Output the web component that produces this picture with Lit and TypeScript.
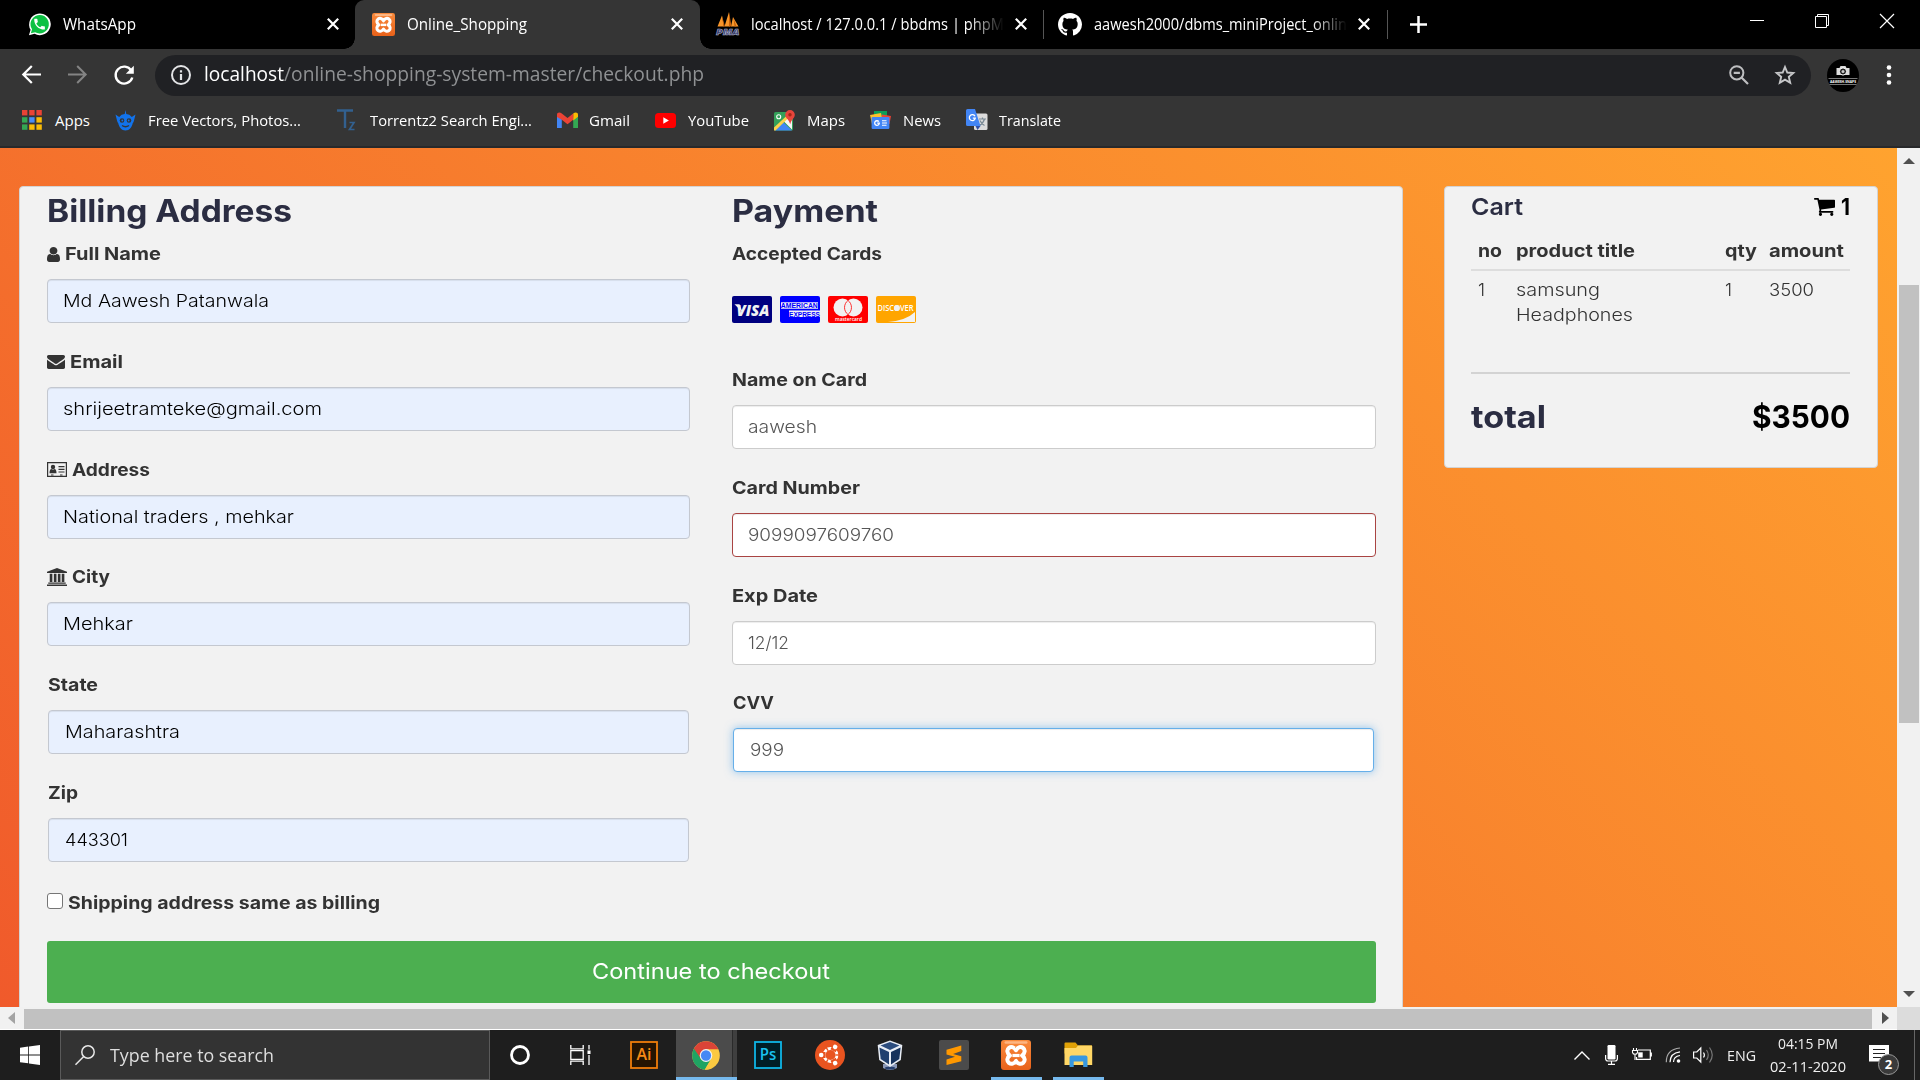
import { LitElement, html, css, svg, nothing } from "lit";
import { customElement, property, query } from "lit/decorators.js";

/** One line of text, condensed or widened to a given advance width. */
@customElement("fit-text")
class FitText extends LitElement {
  static styles = css`
    :host { display: inline-block; white-space: nowrap; flex: none; }
    .run { display: inline-block; transform-origin: left center; }
  `;
  @property() text = "";
  @property({ type: Number }) w = 0;
  @query(".run") run!: HTMLElement;
  firstUpdated() {
    const natural = this.run.getBoundingClientRect().width;
    this.style.width = this.w + "px";
    this.run.style.transform = `scaleX(${(this.w / natural).toFixed(4)})`;
  }
  render() { return html`<span class="run">${this.text}</span>`; }
}

const t = (text: string, w: number, cls = "") => html`<fit-text class=${cls} .text=${text} .w=${w}></fit-text>`;

const icon = (w: number, h: number, vb: string, body: unknown, cls = "") =>
  html`<svg class="ic ${cls}" width=${w} height=${h} viewBox=${vb} preserveAspectRatio="none">${body}</svg>`;

const PHONE = "M6.62 10.79c1.44 2.83 3.76 5.14 6.59 6.59l2.2-2.2c.27-.27.67-.36 1.02-.24 1.12.37 2.33.57 3.57.57.55 0 1 .45 1 1V20c0 .55-.45 1-1 1-9.39 0-17-7.61-17-17 0-.55.45-1 1-1h3.5c.55 0 1 .45 1 1 0 1.25.2 2.45.57 3.57.11.35.03.74-.25 1.02l-2.2 2.2z";
const OCTO = "M8 0C3.58 0 0 3.58 0 8c0 3.54 2.29 6.53 5.47 7.59.4.07.55-.17.55-.38 0-.19-.01-.82-.01-1.49-2.01.37-2.53-.49-2.69-.94-.09-.23-.48-.94-.82-1.13-.28-.15-.68-.52-.01-.53.63-.01 1.08.58 1.23.82.72 1.21 1.87.87 2.33.66.07-.52.28-.87.51-1.07-1.78-.2-3.64-.89-3.64-3.95 0-.87.31-1.59.82-2.15-.08-.2-.36-1.02.08-2.12 0 0 .67-.21 2.2.82.64-.18 1.32-.27 2-.27s1.36.09 2 .27c1.53-1.04 2.2-.82 2.2-.82.44 1.1.16 1.92.08 2.12.51.56.82 1.27.82 2.15 0 3.07-1.87 3.75-3.65 3.95.29.25.54.73.54 1.48 0 1.07-.01 1.93-.01 2.2 0 .21.15.46.55.38A8.01 8.01 0 0 0 16 8c0-4.42-3.58-8-8-8z";
const USER = "M1536 1399q0 109-62.5 187t-150.5 78h-854q-88 0-150.5-78t-62.5-187q0-85 8.5-160.5t31.5-152 58.5-131 94-89 134.5-34.5q131 128 313 128t313-128q76 0 134.5 34.5t94 89 58.5 131 31.5 152 8.500 160.500zm-256-887q0 159-112.500 271.500t-271.500 112.500-271.500-112.500-112.500-271.500 112.500-271.500 271.500-112.500 271.500 112.500 112.500 271.500z";
const ENVELOPE = "M1792 710v794q0 66-47 113t-113 47h-1472q-66 0-113-47t-47-113v-794q44 49 101 87 362 246 497 345 57 42 92.500 65.500t94.500 48 110 24.500h2q51 0 110-24.500t94.500-48 92.500-65.500q170-123 498-345 57-39 100-87zm0-294q0 79-49 151t-122 123q-376 261-468 325-10 7-42.500 31t-54 38.500-52 32.500-57.500 27-50 9h-2q-23 0-50-9t-57.500-27-52-32.500-54-38.500-42.500-31q-91-64-262-182.500t-205-142.500q-62-42-117-115.500t-55-136.500q0-78 41.500-130t118.500-52h1472q65 0 112.500 47t47.500 113z";
const CART = "M704 1536q0 52-38 90t-90 38-90-38-38-90 38-90 90-38 90 38 38 90zm896 0q0 52-38 90t-90 38-90-38-38-90 38-90 90-38 90 38 38 90zm128-1088v512q0 24-16.500 42.500t-40.500 21.500l-1044 122q13 60 13 70 0 16-24 64h920q26 0 45 19t19 45-19 45-45 19h-1024q-26 0-45-19t-19-45q0-11 8-31.500t16-36 21.500-40 15.500-29.500l-177-823h-204q-26 0-45-19t-19-45 19-45 45-19h256q16 0 28.500 6.500t19.500 15.500 13 24.500 8 26 5.500 29.500 4.500 26h1201q26 0 45 19t19 45z";

const whatsapp = icon(23, 23, "0 0 24 24", svg`
  <path d="M1 23.2l1.7-5.6A11.3 11.3 0 1 1 6.9 21.7z" fill="#fff"/>
  <path d="M3 21.2l1.2-4.2A9.6 9.6 0 1 1 7.4 20z" fill="#0dc143"/>
  <path d=${PHONE} fill="#fff" transform="translate(4.6 4.2) scale(.62)"/>`);
const xampp = (s: number) => icon(s, s, "0 0 30 30", svg`
  <defs><linearGradient id="xg" x1="0" y1="0" x2="0" y2="1"><stop offset="0" stop-color="#f98a3c"/><stop offset="1" stop-color="#e9621a"/></linearGradient></defs>
  <rect width="30" height="30" rx="3" fill="url(#xg)"/><rect x="3.5" y="1.2" width="23" height="2.6" rx="1.3" fill="#ffc49a" opacity=".75"/>
  <path d="M15 10.200c2-3.600 5-3.900 7-2.400 2.600 2 2 5.200-.9 7.700 3 2 3.400 5.400 1 7.400-2.300 1.700-5.400.9-7.100-2-1.700 2.900-4.800 3.700-7.100 2-2.400-2-2-5.400 1-7.400-2.900-2.500-3.500-5.700-.9-7.700 2-1.500 5-1.200 7 2.400z" fill="none" stroke="#fff" stroke-width="4" stroke-linejoin="round"/>
  <path d="M11.400 15.500h7.200" stroke="#fff" stroke-width="3.200"/>`);
const pma = icon(24, 24, "0 0 24 24", svg`
  <path d="M6 3.500L8 14.500H1.500zM13 0l1 14.500H8.500zM17 5l5.500 9.500H15z" fill="#f7962b"/><path d="M13 0l2.500 14.500H13zM6 4l3 10.500H7.500zM17.500 6l3 8.500h-2z" fill="#c9620a"/>
  <text x="0" y="23" class="pmat" textLength="23.500" lengthAdjust="spacingAndGlyphs">PMA</text>`);
const github = icon(24, 23, "0 0 16 16", svg`<path d=${OCTO} fill="#fff"/>`);
const cross = icon(12, 12, "0 0 12 12", svg`<path d="M.8.8l10.400 10.400M11.200.8L.8 11.200" stroke="#fff" stroke-width="2.200"/>`, "cross");

const bookmarks = [
  { name: "Apps", w: 35, box: 35, ic: icon(20, 20, "0 0 20 20", [0, 1, 2].map(r => [0, 1, 2].map(c => svg`<rect x=${c * 7.2} y=${r * 7.2} width="5.400" height="5.400" fill=${[["#ea4335", "#ea4335", "#ea4335"], ["#34a853", "#4a8cf7", "#fbbc05"], ["#34a853", "#fbbc05", "#fbbc05"]][r][c]}/>`))) },
  { name: "Free Vectors, Photos...", w: 153, box: 164, ic: icon(21, 21, "0 0 21 21", svg`
    <path d="M10.500 0l.8 4a7.500 7.500 0 0 1 5.500 3l3.700-2.500-1.500 6q-.5 2-1.200 2.500c-.8 4-3.300 7.500-7.300 7.500S4 17 3.200 13Q2.500 12.500 2 10.500L.5 4.500 4.200 7a7.500 7.500 0 0 1 5.500-3z" fill="#1273eb"/>
    <circle cx="7" cy="10.500" r="2.300" fill="#353535"/><circle cx="14" cy="10.500" r="2.300" fill="#353535"/><circle cx="7.300" cy="10.500" r=".9" fill="#1273eb"/><circle cx="13.700" cy="10.500" r=".9" fill="#1273eb"/>
    <path d="M7 15.500q3.500 2.500 7 0" stroke="#353535" stroke-width="1.400" fill="none"/>`) },
  { name: "Torrentz2 Search Engi...", w: 162, box: 162, ic: icon(20, 22, "0 0 20 22", svg`
    <path d="M0 1.500h16M8 1.500V19" stroke="#32608f" stroke-width="2.400"/><path d="M12.500 13.500h4.500l-4.500 7h5" stroke="#32608f" stroke-width="1.700" fill="none"/>`) },
  { name: "Gmail", w: 41, box: 40, ic: icon(21, 16, "0 0 21 16", svg`
    <path d="M0 2.500V16h4.800V6z" fill="#4285f4"/><path d="M21 2.500V16h-4.800V6z" fill="#34a853"/><path d="M16.200 1.500C18 0 21 0 21 2.800v2l-4.800 3.600z" fill="#fbbc04"/>
    <path d="M0 2.800C0 0 3 0 4.800 1.500L10.500 6l5.700-4.500v6.300l-5.700 4.400L4.800 7.800 0 5z" fill="#ea4335"/>`) },
  { name: "YouTube", w: 61, box: 61, ic: icon(21, 15, "0 0 21 15", svg`<rect width="21" height="15" rx="3.500" fill="#f00"/><path d="M8.300 4.200l5.600 3.300-5.600 3.300z" fill="#fff"/>`) },
  { name: "Maps", w: 38, box: 38, ic: icon(21, 21, "0 0 21 21", svg`
    <rect x="0" y="2" width="19" height="18.500" rx="1.500" fill="#34a059"/><path d="M0 19L18 4v15.500L9.500 11z" fill="#f6f6f6"/><path d="M1 20.500l8.500-8 8.500 8z" fill="#4285f4"/><path d="M0 17.500L13.500 5l2 2L1.500 20.500H0z" fill="#fbd04c"/>
    <path d="M16 0a4.800 4.800 0 0 1 4.800 4.800c0 3.200-3.600 5-4.600 9.500-1-4.500-5-6.300-5-9.500A4.800 4.800 0 0 1 16 0z" fill="#e8453c"/><circle cx="16" cy="4.800" r="1.700" fill="#a52714"/><circle cx="4.700" cy="6.700" r="2" stroke="#fff" stroke-width="1.100" fill="none"/>`) },
  { name: "News", w: 38, box: 38, ic: icon(21, 18, "0 0 21 18", svg`
    <rect x="4" y="0" width="13" height="9" fill="#0c9d58"/><path d="M0 4l11-2 2 9-11 2z" fill="#fbc02d"/><path d="M21 5l-9-1.500-1 8 8.500 1.500z" fill="#ea4335"/><rect x="1.600" y="6" width="17.800" height="12" rx="1.200" fill="#4285f4"/>
    <path d="M8.800 10.600a2.300 2.300 0 1 0 .5 1.600H7.200" fill="none" stroke="#fff" stroke-width="1.300"/><path d="M12 9.800h4.500M12 12h5M12 14.200h4.500" stroke="#fff" stroke-width="1.100"/>`) },
  { name: "Translate", w: 62, box: 62, ic: icon(22, 22, "0 0 22 22", svg`
    <rect x="8" y="4.500" width="13.500" height="16.500" rx="1.500" fill="#dcdcdc"/><path d="M13 10h7M16.500 8.500V10M18.500 10q-1 4-5 6.500M14 11.500q1.500 3.500 4.500 5" stroke="#7a8a95" stroke-width="1.200" fill="none"/>
    <path d="M1.500 0H9l5.500 17H1.500A1.500 1.500 0 0 1 0 15.500v-14A1.500 1.500 0 0 1 1.500 0z" fill="#4285f4"/><path d="M9.500 17h5l-3 4z" fill="#3051a8"/><path d="M9 7.200a3 3 0 1 0 .3 2H6.800" stroke="#fff" stroke-width="1.300" fill="none"/>`) },
];

const chrome = icon(28, 29, "0 0 28 28", svg`
  <circle cx="14" cy="14" r="13.800" fill="#fbc941"/>
  <path d="M14 14L1.900 7.300A13.800 13.800 0 0 0 12.800 27.800L19.500 17z" fill="#1fa463"/>
  <path d="M14 .2A13.800 13.800 0 0 1 26.400 8H14l-4.500 10L1.900 7.300A13.800 13.800 0 0 1 14 .2z" fill="#db4437"/>
  <path d="M14 14h12.600A13.800 13.800 0 0 1 12.800 27.800l6.500-11z" fill="#fbc941"/>
  <circle cx="14" cy="14" r="6.300" fill="#f3f3f3"/><circle cx="14" cy="14" r="5.100" fill="#4688f4"/>`);

const apps: { cls: string; ic: unknown }[] = [
  { cls: "", ic: icon(20, 20, "0 0 20 20", svg`<circle cx="10" cy="10" r="8.500" fill="none" stroke="#fff" stroke-width="2.800"/>`) },
  { cls: "tv", ic: icon(21, 20, "0 0 21 20", svg`<path d="M.8 0v3.800h12.400V0M.8 20v-3.800h12.400V20M.8 5.700h12.400v8.600H.8zM19 0v4.500M19 10v10" fill="none" stroke="#fff" stroke-width="1.300"/><rect x="17.500" y="5.500" width="3" height="3.500" fill="#fff"/>`) },
  { cls: "", ic: icon(28, 28, "0 0 28 28", svg`<rect x="1" y="1" width="26" height="26" fill="#251402" stroke="#f07d0a" stroke-width="1.800"/><text x="6.500" y="19" class="adobe ai" textLength="15" lengthAdjust="spacingAndGlyphs">Ai</text>`) },
  { cls: "active", ic: chrome },
  { cls: "", ic: icon(28, 28, "0 0 28 28", svg`<rect x="1" y="1" width="26" height="26" fill="#001d26" stroke="#0fb5e6" stroke-width="1.800"/><text x="5.800" y="19" class="adobe ps" textLength="16.500" lengthAdjust="spacingAndGlyphs">Ps</text>`) },
  { cls: "", ic: icon(30, 30, "0 0 30 30", svg`<circle cx="15" cy="15" r="15" fill="#e95420"/><circle cx="15.500" cy="15" r="6.500" fill="none" stroke="#fff" stroke-width="2.800"/>
    ${[0, 120, 240].map(a => svg`<g transform="rotate(${a} 15.500 15)"><path d="M4 15h6.500" stroke="#e95420" stroke-width="6"/><circle cx="6.200" cy="15" r="2.300" fill="#fff"/><path d="M20.500 15h4" stroke="#e95420" stroke-width="1.400"/></g>`)}`) },
  { cls: "vb", ic: icon(26, 30, "0 0 26 30", svg`<path d="M6 24h14v4q-7 4-14 0z" fill="#8b99b8"/><ellipse cx="13" cy="28" rx="5" ry="1.500" fill="#27406f"/>
    <path d="M13 .5L25.300 5l-1.500 15L13 27 2.200 20 .7 5z" fill="#e9eef6"/><path d="M13 2l9.500 3.600L13 10 3.500 5.600z" fill="#2b4c7e"/><path d="M2.400 7.500L12 12v12.500L3.700 19z" fill="#20406f"/><path d="M23.600 7.500L14 12v12.500l8.300-5.500z" fill="#16325c"/>`) },
  { cls: "", ic: icon(30, 30, "0 0 30 30", svg`<rect width="30" height="30" rx="2" fill="#4b4b4b"/><path d="M22.300 5.500v5.600l-8.200 2.900 8.200 2.200v5L7.500 25v-5.500l8.500-2.800-8.500-2.200V9.800z" fill="#ff9800"/>`) },
  { cls: "run", ic: xampp(30) },
  { cls: "run", ic: icon(29, 26, "0 0 29 26", svg`<path d="M.5 1.500Q.5.500 1.500.500h10l2.500 3H28v8H.500z" fill="#e0a106"/><path d="M.5 6h11.500l2-2.500h13.500q.700 0 .7.700V23H.500z" fill="#ffd766"/><path d="M5.500 25V15.500q0-2 2-2h14q2 0 2 2V25h-4.300v-5.500h-9.500V25z" fill="#3898e0"/>`) },
];

interface Field { label: string; lw: number; value: string; vw: number; ic?: unknown; cls?: string }
const billing: Field[] = [
  { label: "Full Name", lw: 96, value: "Md Aawesh Patanwala", vw: 206, ic: icon(13, 15, "256 128 1280 1536", svg`<path d=${USER} fill="#333"/>`) },
  { label: "Email", lw: 53, value: "shrijeetramteke@gmail.com", vw: 259, ic: icon(18, 14, "0 256 1792 1408", svg`<path d=${ENVELOPE} fill="#333"/>`) },
  { label: "Address", lw: 78, value: "National traders , mehkar", vw: 231, ic: icon(20, 15, "0 0 20 15", svg`
    <path d="M.6.600h18.800v13.800H.6z" fill="none" stroke="#333" stroke-width="1.200"/><circle cx="6" cy="5" r="2.200" fill="#333"/><path d="M2.500 11.200q0-4 2-4.200 1.500 1 3 0 2 .2 2 4.200z" fill="#333"/><path d="M11.500 4.600h6M11.500 7.300h6M11.500 10h6M4 13h2.500M13 13h2.500" stroke="#333" stroke-width="1.200"/>`) },
  { label: "City", lw: 38, value: "Mehkar", vw: 70, ic: icon(20, 18, "0 0 19 18", svg`
    <path d="M9.500 0L19 3.800V5H0V3.800zM0 16.500h19V18H0zM1.200 14.500h16.600v1.300H1.200zM2.600 5.800h2.500v8.200H2.600zM6.500 5.800H9v8.200H6.500zM10.300 5.800h2.500v8.200h-2.500zM14 5.800h2.500v8.200H14z" fill="#333"/>`) },
  { label: "State", lw: 50, value: "Maharashtra", vw: 115, cls: "inset" },
  { label: "Zip", lw: 30, value: "443301", vw: 63, cls: "inset" },
];
const payment: Field[] = [
  { label: "Name on Card", lw: 135, value: "aawesh", vw: 69, cls: "plain" },
  { label: "Card Number", lw: 128, value: "9099097609760", vw: 146, cls: "plain bad" },
  { label: "Exp Date", lw: 86, value: "12/12", vw: 41, cls: "plain" },
  { label: "CVV", lw: 41, value: "999", vw: 34, cls: "plain inset focus" },
];

const field = (f: Field) => html`<div class="field ${f.cls ?? ""}">
  <div class="label">${f.ic ?? nothing}${t(f.label, f.lw)}</div>
  <div class="input">${t(f.value, f.vw)}</div></div>`;

const cards = [
  icon(40, 27, "0 0 40 27", svg`<rect width="40" height="27" rx="2" fill="#000080"/><text x="4.500" y="19.500" class="visa" textLength="33" lengthAdjust="spacingAndGlyphs">VISA</text><path d="M2.500 8.300h5l3 8z" fill="#f2f2f2"/>`),
  icon(40, 27, "0 0 40 27", svg`<rect width="40" height="27" rx="2" fill="#00f"/><path d="M1 6.300h37v6.500H1zM9 14.500h31v6.500H9z" fill="#f2f2f2"/><text x=".8" y="12.400" class="amex" textLength="37" lengthAdjust="spacingAndGlyphs">AMERICAN</text><text x="9" y="20.600" class="amex" textLength="31" lengthAdjust="spacingAndGlyphs">EXPRESS</text>`),
  icon(40, 27, "0 0 40 27", svg`<rect width="40" height="27" rx="2" fill="#f00"/><circle cx="14.500" cy="11.500" r="9" fill="#f2f2f2"/><circle cx="25.500" cy="11.500" r="9" fill="#f2f2f2"/><path d="M20 4.400a9 9 0 0 1 0 14.200 9 9 0 0 1 0-14.200z" fill="none" stroke="#f00" stroke-width=".8"/><text x="7" y="25" class="mc" textLength="27" lengthAdjust="spacingAndGlyphs">mastercard</text>`),
  icon(40, 27, "0 0 40 27", svg`<rect width="40" height="27" rx="2" fill="#ffa500"/><path d="M39 16v10H12q18-1.500 27-10z" fill="#f2f2f2"/><text x="1.500" y="15" class="disc" textLength="36" lengthAdjust="spacingAndGlyphs">DISCOVER</text><circle cx="20.900" cy="12" r="3" fill="#f2f2f2"/>`),
];

@customElement("app-root")
class AppRoot extends LitElement {
  static styles = css`
    :host { display: block; width: 1920px; height: 1080px; overflow: hidden; font-family: "Open Sans", "Noto Sans", sans-serif; color: #fff; }
    * { box-sizing: border-box; }
    .ic { display: block; flex: none; overflow: visible; }
    .tabs { height: 49px; background: #000; display: flex; align-items: stretch; font-size: 15.500px; }
    .tab { display: flex; align-items: center; height: 48px; }
    .tab fit-text { margin-left: 12px; }
    .tab .cross { margin-left: auto; }
    .tab.wa { width: 355px; padding: 0 16px 0 28px; }
    .tab.on { width: 345px; height: 49px; padding: 0 17px 1px 17px; background: #353535; border-radius: 9px 9px 0 0; position: relative; }
    .tab.on::before, .tab.on::after { content: ""; position: absolute; bottom: 0; width: 11px; height: 11px; }
    .tab.on::before { left: -11px; background: radial-gradient(circle at 0 0, transparent 10.500px, #353535 11px); }
    .tab.on::after { right: -11px; background: radial-gradient(circle at 100% 0, transparent 10.500px, #353535 11px); }
    .tab.pm { width: 343px; padding: 0 16px; }
    .tab.pm fit-text { margin-left: 11px; }
    .tab.gh { width: 343px; padding: 0 17px 0 14px; }
    .tab.gh fit-text { margin-left: 12px; }
    .fade { -webkit-mask-image: linear-gradient(90deg, #000 86%, transparent); mask-image: linear-gradient(90deg, #000 86%, transparent); }
    .sep { width: 1px; height: 29px; margin-top: 10px; background: #555; }
    .plus { margin: 16px 0 0 22px; }
    .win { display: flex; margin-left: auto; gap: 51px; padding: 13px 26px 0 0; }
    .bar { height: 52px; background: #353535; display: flex; align-items: center; padding: 0 28px 0 22px; }
    .nav { display: flex; gap: 27px; align-items: center; width: 133px; }
    .nav .ic { margin-top: -1px; }
    .omni { height: 41px; width: 1656px; border-radius: 20.500px; background: #202124; display: flex; align-items: center; padding: 0 16px 1px; font-size: 19.500px; color: #8f9193; }
    .omni fit-text { margin-top: -2px; }
    .omni .host { color: #fff; margin-left: 13px; }
    .omni .zoom { margin-left: auto; margin-right: 26px; }
    .avatar { margin-left: 16px; }
    .dots { margin-left: auto; }
    .marks { height: 47px; background: #353535; border-bottom: 2px solid #28292b; padding: 0 0 7px 22px; display: flex; align-items: center; gap: 25px; font-size: 15px; }
    .mark { display: flex; align-items: center; height: 100%; }
    .mark .pic { width: 33px; }
    .view { display: flex; height: 859px; background: #f1f1f1; }
    .page { width: 1897px; height: 859px; overflow: hidden; background: linear-gradient(45deg, #f05a2b, #ffa32f); padding: 38px 19px 0; display: flex; align-items: flex-start; gap: 41px; font-family: Inter, "Liberation Sans", sans-serif; }
    .panel { background: #f2f2f2; border: 1px solid #d3d3d3; border-radius: 4px; color: #333; }
    .form { width: 1384px; height: 900px; padding: 4px 26px 0 27px; }
    .cols { display: grid; grid-template-columns: 643px 644px; column-gap: 42px; height: 698px; }
    .h3 { font-size: 31px; line-height: 40px; font-weight: 700; color: #2b2d42; margin-bottom: 10px; height: 40px; }
    .field { height: 107.750px; }
    .label { display: flex; align-items: center; height: 26px; line-height: 26px; font-size: 17.500px; font-weight: 700; gap: 5px; }
    .input { margin-top: 12px; height: 44px; border: 1px solid #c4c8d0; border-radius: 4px; background: #e8f0fe; box-shadow: inset 0 1px 1px rgba(0,0,0,.075); padding: 0 15px 1px; display: flex; align-items: center; font-size: 17.500px; font-weight: 300; color: #000; }
    .plain .input { background: #fff; border-color: #ccc; color: #555; }
    .bad .input { border-color: #a94442; }
    .inset .input { margin-left: 1px; margin-right: 1px; padding-left: 16px; }
    .inset .label { padding-left: 1px; }
    .focus .input { margin-right: 2px; border-color: #66afe9; box-shadow: inset 0 1px 1px rgba(0,0,0,.075), 0 0 9px rgba(102,175,233,.7); }
    .cards { display: flex; gap: 8px; margin: 29px 0 44px; height: 27px; }
    .check { display: flex; align-items: center; height: 26px; font-size: 17.500px; font-weight: 700; gap: 5px; }
    .box { width: 16px; height: 16px; border: 1px solid #767676; border-radius: 3px; background: #fff; margin-top: -2px; }
    .go { margin-top: 26px; height: 62px; background: #4caf50; border-radius: 3px; display: flex; align-items: center; justify-content: center; color: #fff; font-size: 22px; font-weight: 400; padding: 0 2px 2px 0; }
    .cart { width: 434px; height: 282px; padding: 0 27px 0 26px; }
    .cart-head { display: flex; align-items: center; height: 39px; font-size: 23.500px; font-weight: 600; color: #2b2d42; justify-content: space-between; }
    .count { display: flex; align-items: center; gap: 6px; color: #000; font-weight: 700; }
    .row { display: grid; grid-template-columns: 38px 209px 44px 1fr; padding-left: 7px; font-size: 17.500px; line-height: 25px; color: #333; }
    .head { font-weight: 700; height: 45px; padding-top: 12px; border-bottom: 2px solid #ddd; }
    .body { font-weight: 300; height: 103px; padding-top: 6px; border-bottom: 2px solid #d3d3d3; }
    .stack { display: flex; flex-direction: column; }
    .total { display: flex; justify-content: space-between; align-items: center; height: 84px; font-size: 31.500px; font-weight: 700; color: #2b2d42; }
    .sum { color: #000; }
    .vbar { width: 23px; display: flex; flex-direction: column; align-items: center; padding: 10px 0; justify-content: space-between; }
    .vthumb { width: 20px; height: 438px; background: #c1c1c1; margin-bottom: 148px; }
    .hbar { height: 23px; background: #f1f1f1; display: flex; align-items: center; padding-left: 8px; border-bottom: 1px solid #fff; }
    .hthumb { height: 20px; width: 1848px; margin: 1px 10px 0 9px; background: #c1c1c1; }
    .corner { width: 23px; height: 23px; background: #dcdcdc; margin-left: auto; }
    .task { height: 50px; background: #1e1e1e; display: flex; align-items: center; }
    .start { width: 60px; padding-left: 20px; }
    .search { width: 430px; height: 50px; background: #333; border: 1px solid #5a5a5a; display: flex; align-items: center; padding-left: 14px; gap: 15px; font-size: 18px; color: #dedede; }
    .app { width: 62px; height: 50px; display: flex; justify-content: center; align-items: center; }
    .app:nth-child(3) { width: 60px; }
    .app.tv { padding-right: 3px; width: 63px; }
    .app.vb { padding-right: 4px; }
    .app.active { background: linear-gradient(90deg, #4b4b4b 56px, #2a2a2a 56px 57px, #3f3f3f 57px); background-origin: border-box; border-bottom: 3px solid #76b9ed; padding: 3px 2px 0 0; width: 61px; margin-left: 1px; }
    .app.run { background: linear-gradient(#76b9ed, #76b9ed) center bottom / 51px 3px no-repeat; }
    .tray { margin-left: auto; display: flex; align-items: center; height: 50px; font-size: 15px; color: #f0f0f0; padding-right: 5px; }
    .caret { margin-right: 15px; }
    .mic { margin-right: 14px; }
    .bat { margin-right: 13px; }
    .wifi { margin-right: 12px; }
    .vol { margin-right: 13px; }
    .clock { display: flex; flex-direction: column; align-items: center; line-height: 23px; width: 78px; margin: 0 22px 1px 13px; }
    .note { margin-right: 15px; }
    .edge { width: 1px; height: 50px; background: #666; }
    text { font-family: "Open Sans", sans-serif; }
    .pmat { font: italic 800 9px "Open Sans", sans-serif; fill: #333a68; stroke: #b7b9d6; stroke-width: .5px; }
    .adobe { font-size: 16px; font-weight: 600; }
    .ai { fill: #f78a16; } .ps { fill: #19c0ef; }
    .visa { font: italic 800 15px "Open Sans", sans-serif; fill: #f2f2f2; }
    .amex { font: 800 7.500px "Liberation Sans", sans-serif; fill: #00f; }
    .mc { font: 600 6px "Open Sans", sans-serif; fill: #fff; }
    .disc { font: 600 9px "Open Sans", sans-serif; fill: #fff; }
    .badge { font: 700 13px "Open Sans", sans-serif; fill: #fff; }
    .av { font: 700 4px "Open Sans", sans-serif; fill: #fff; }
  `;

  render() {
    return html`
      <div class="tabs">
        <div class="tab wa">${whatsapp}${t("WhatsApp", 73)}${cross}</div>
        <div class="tab on">${xampp(23)}${t("Online_Shopping", 120)}${cross}</div>
        <div class="tab pm">${pma}${t("localhost / 127.0.0.1 / bbdms | phpM", 253, "fade")}${cross}</div>
        <div class="sep"></div>
        <div class="tab gh">${github}${t("aawesh2000/dbms_miniProject_onlin", 253, "fade")}${cross}</div>
        <div class="sep"></div>
        ${icon(17, 17, "0 0 17 17", svg`<path d="M8.500 0v17M0 8.500h17" stroke="#fff" stroke-width="2.500"/>`, "plus")}
        <div class="win">
          ${icon(14, 16, "0 0 14 16", svg`<path d="M0 7.500h14" stroke="#fff"/>`)}
          ${icon(14, 16, "0 0 14 16", svg`<path d="M.5 3.500h11v11H.500zM2.500 3V1.500h11v11H12" fill="none" stroke="#fff"/>`)}
          ${icon(14, 16, "0 0 14 16", svg`<path d="M0 1l14 14M14 1L0 15" stroke="#fff" stroke-width="1.200"/>`)}
        </div>
      </div>
      <div class="bar">
        <div class="nav">
          ${icon(19, 19, "0 0 19 19", svg`<path d="M19 9.500H1.500M9.800 1L1.300 9.500l8.500 8.500" fill="none" stroke="#fff" stroke-width="2.200"/>`)}
          ${icon(19, 19, "0 0 19 19", svg`<path d="M0 9.500h17.500M9.200 1l8.500 8.500-8.500 8.500" fill="none" stroke="#848484" stroke-width="2"/>`)}
          ${icon(20, 20, "0 0 20 20", svg`<path d="M17.300 5.500A8.500 8.500 0 1 0 18.300 12.500" fill="none" stroke="#fff" stroke-width="2.400"/><path d="M19.800.8v8h-8z" fill="#fff"/>`)}
        </div>
        <div class="omni">
          ${icon(20, 20, "0 0 20 20", svg`<circle cx="10" cy="10" r="9" fill="none" stroke="#e3e4e6" stroke-width="2"/><path d="M10 9v6M10 5.200v2.200" stroke="#e3e4e6" stroke-width="2.200"/>`)}
          ${t("localhost", 80, "host")}${t("/online-shopping-system-master/checkout.php", 420)}
          ${icon(20, 20, "0 0 20 20", svg`<circle cx="7.800" cy="7.800" r="6.600" fill="none" stroke="#bdbec0" stroke-width="2"/><path d="M4.700 7.800h6.200M12.500 12.500l6.500 6.500" stroke="#bdbec0" stroke-width="2.200"/>`, "zoom")}
          ${icon(20, 20, "0 0 20 20", svg`<path d="M10 2l2.300 5.500 6 .5-4.500 3.900 1.400 5.900-5.200-3.200-5.200 3.200 1.400-5.900L1.700 8l6-.5z" fill="none" stroke="#c6c7c9" stroke-width="1.900"/>`)}
        </div>
        ${icon(32, 33, "0 0 32 33", svg`<ellipse cx="16" cy="16.500" rx="16" ry="16.500" fill="#000"/><path d="M9.500 9h3l1-2h5l1 2h3v7h-13z" fill="#ddd"/><circle cx="16" cy="12.500" r="3.600" fill="#222" stroke="#fff"/><circle cx="16" cy="12.500" r="1.500" fill="#ccc"/><path d="M1.500 19.500h29M2.500 25.500h27" stroke="#aaa" stroke-width=".7"/><text x="3" y="24.200" class="av" textLength="26" lengthAdjust="spacingAndGlyphs">AAWESH.SNAPS</text>`, "avatar")}
        ${icon(6, 20, "0 0 6 20", svg`<circle cx="3" cy="2.500" r="2.300" fill="#fff"/><circle cx="3" cy="10" r="2.300" fill="#fff"/><circle cx="3" cy="17.500" r="2.300" fill="#fff"/>`, "dots")}
      </div>
      <div class="marks">
        ${bookmarks.map(b => html`<div class="mark" style="width:${33 + b.box}px"><div class="pic">${b.ic}</div>${t(b.name, b.w)}</div>`)}
      </div>
      <div class="view">
        <div class="page">
          <div class="panel form">
            <div class="cols">
              <div><div class="h3">${t("Billing Address", 245)}</div>${billing.map(field)}</div>
              <div>
                <div class="h3">${t("Payment", 146)}</div>
                <div class="label">${t("Accepted Cards", 150)}</div>
                <div class="cards">${cards}</div>
                ${payment.map(field)}
              </div>
            </div>
            <div class="check"><div class="box"></div>${t("Shipping address same as billing", 312)}</div>
            <div class="go">${t("Continue to checkout", 238)}</div>
          </div>
          <div class="panel cart">
            <div class="cart-head">${t("Cart", 52)}<div class="count">${icon(21, 18, "64 256 1664 1408", svg`<path d=${CART} fill="#000"/>`)}${t("1", 9)}</div></div>
            <div class="row head">${t("no", 24)}${t("product title", 119)}${t("qty", 32)}${t("amount", 75)}</div>
            <div class="row body">${t("1", 7)}<div class="stack">${t("samsung", 84)}${t("Headphones", 117)}</div>${t("1", 7)}${t("3500", 45)}</div>
            <div class="total">${t("total", 75)}${t("$3500", 98, "sum")}</div>
          </div>
        </div>
        <div class="vbar">
          ${icon(12, 6, "0 0 12 6", svg`<path d="M0 6l6-6 6 6z" fill="#505050"/>`)}
          <div class="vthumb"></div>
          ${icon(12, 6, "0 0 12 6", svg`<path d="M0 0l6 6 6-6z" fill="#505050"/>`)}
        </div>
      </div>
      <div class="hbar">
        ${icon(7, 12, "0 0 7 12", svg`<path d="M7 0L0 6l7 6z" fill="#a3a3a3"/>`)}
        <div class="hthumb"></div>
        ${icon(7, 12, "0 0 7 12", svg`<path d="M0 0l7 6-7 6z" fill="#505050"/>`)}
        <div class="corner"></div>
      </div>
      <div class="task">
        <div class="start">${icon(20, 20, "0 0 20 20", svg`<path d="M0 2.700L8.200 1.600v7.900H0zM9 1.500L20 0v9.500H9zM0 10.400h8.200v7.900L0 17.200zM9 10.400h11V20L9 18.500z" fill="#fff"/>`)}</div>
        <div class="search">${icon(20, 20, "0 0 20 20", svg`<circle cx="13" cy="7" r="6.200" fill="none" stroke="#e8e8e8" stroke-width="1.500"/><path d="M8.700 11.500L.5 19.700" stroke="#e8e8e8" stroke-width="1.500"/>`)}${t("Type here to search", 164)}</div>
        ${apps.map(a => html`<div class="app ${a.cls}">${a.ic}</div>`)}
        <div class="tray">
          ${icon(16, 9, "0 0 16 9", svg`<path d="M.5 8.500L8 1l7.500 7.500" fill="none" stroke="#fff" stroke-width="1.400"/>`, "caret")}
          ${icon(13, 20, "0 0 13 20", svg`<rect x="2.500" y="0" width="8" height="14.500" rx="1.200" fill="#fff"/><path d="M.6 10v3.500q0 2.500 2.500 2.500h6.800q2.500 0 2.500-2.500V10M6.500 16v3.300M3 19.400h7" fill="none" stroke="#fff" stroke-width="1.200"/>`, "mic")}
          ${icon(20, 14, "0 0 20 14", svg`<path d="M6 2h12.300v9.300H4.500V9M19.300 4.500v4" fill="none" stroke="#fff" stroke-width="1.200"/><path d="M6.200 9.500V4.300h4.500v5.200z" fill="#fff"/><path d="M1.500 0v2.500M4.500 0v2.500M.5 2.500h5v2q-.5 1.800-2.500 1.800T.5 4.500zM3 6v6" fill="none" stroke="#fff" stroke-width="1.100"/>`, "bat")}
          ${icon(16, 16, "0 0 16 16", svg`<circle cx="13.500" cy="14" r="1.800" fill="#fff"/><path d="M8.500 15q0-5.500 6.500-6.500M5 15.300Q5 6 15 4.800" fill="none" stroke="#fff" stroke-width="1.200"/><path d="M1.300 15.300Q1 2.500 15 1" fill="none" stroke="#aaa" stroke-width="1.200"/>`, "wifi")}
          ${icon(21, 18, "0 0 21 18", svg`<path d="M.6 6h3.200l4-4v14l-4-4H.6z" fill="none" stroke="#fff" stroke-width="1.200"/><path d="M10.500 6.500q1.800 2.500 0 5" fill="none" stroke="#fff" stroke-width="1.200"/><path d="M13.500 4q3.500 5 0 10M16.500 1.500q5.500 7.500 0 15" fill="none" stroke="#777" stroke-width="1.200"/>`, "vol")}
          ${t("ENG", 29)}
          <div class="clock">${t("04:15 PM", 60)}${t("02-11-2020", 76)}</div>
          ${icon(30, 21, "0 0 30 21", svg`<path d="M0 0h20v16.500h-4.500v4l-4-4H0z" fill="#fff"/><path d="M4 4.500h12M4 8.500h12M4 12.500h8" stroke="#222" stroke-width="1.200"/><circle cx="19.500" cy="19.500" r="10" fill="#3a3a3a" stroke="#999"/><text x="15.800" y="24.200" class="badge">2</text>`, "note")}
          <div class="edge"></div>
        </div>
      </div>`;
  }
}
